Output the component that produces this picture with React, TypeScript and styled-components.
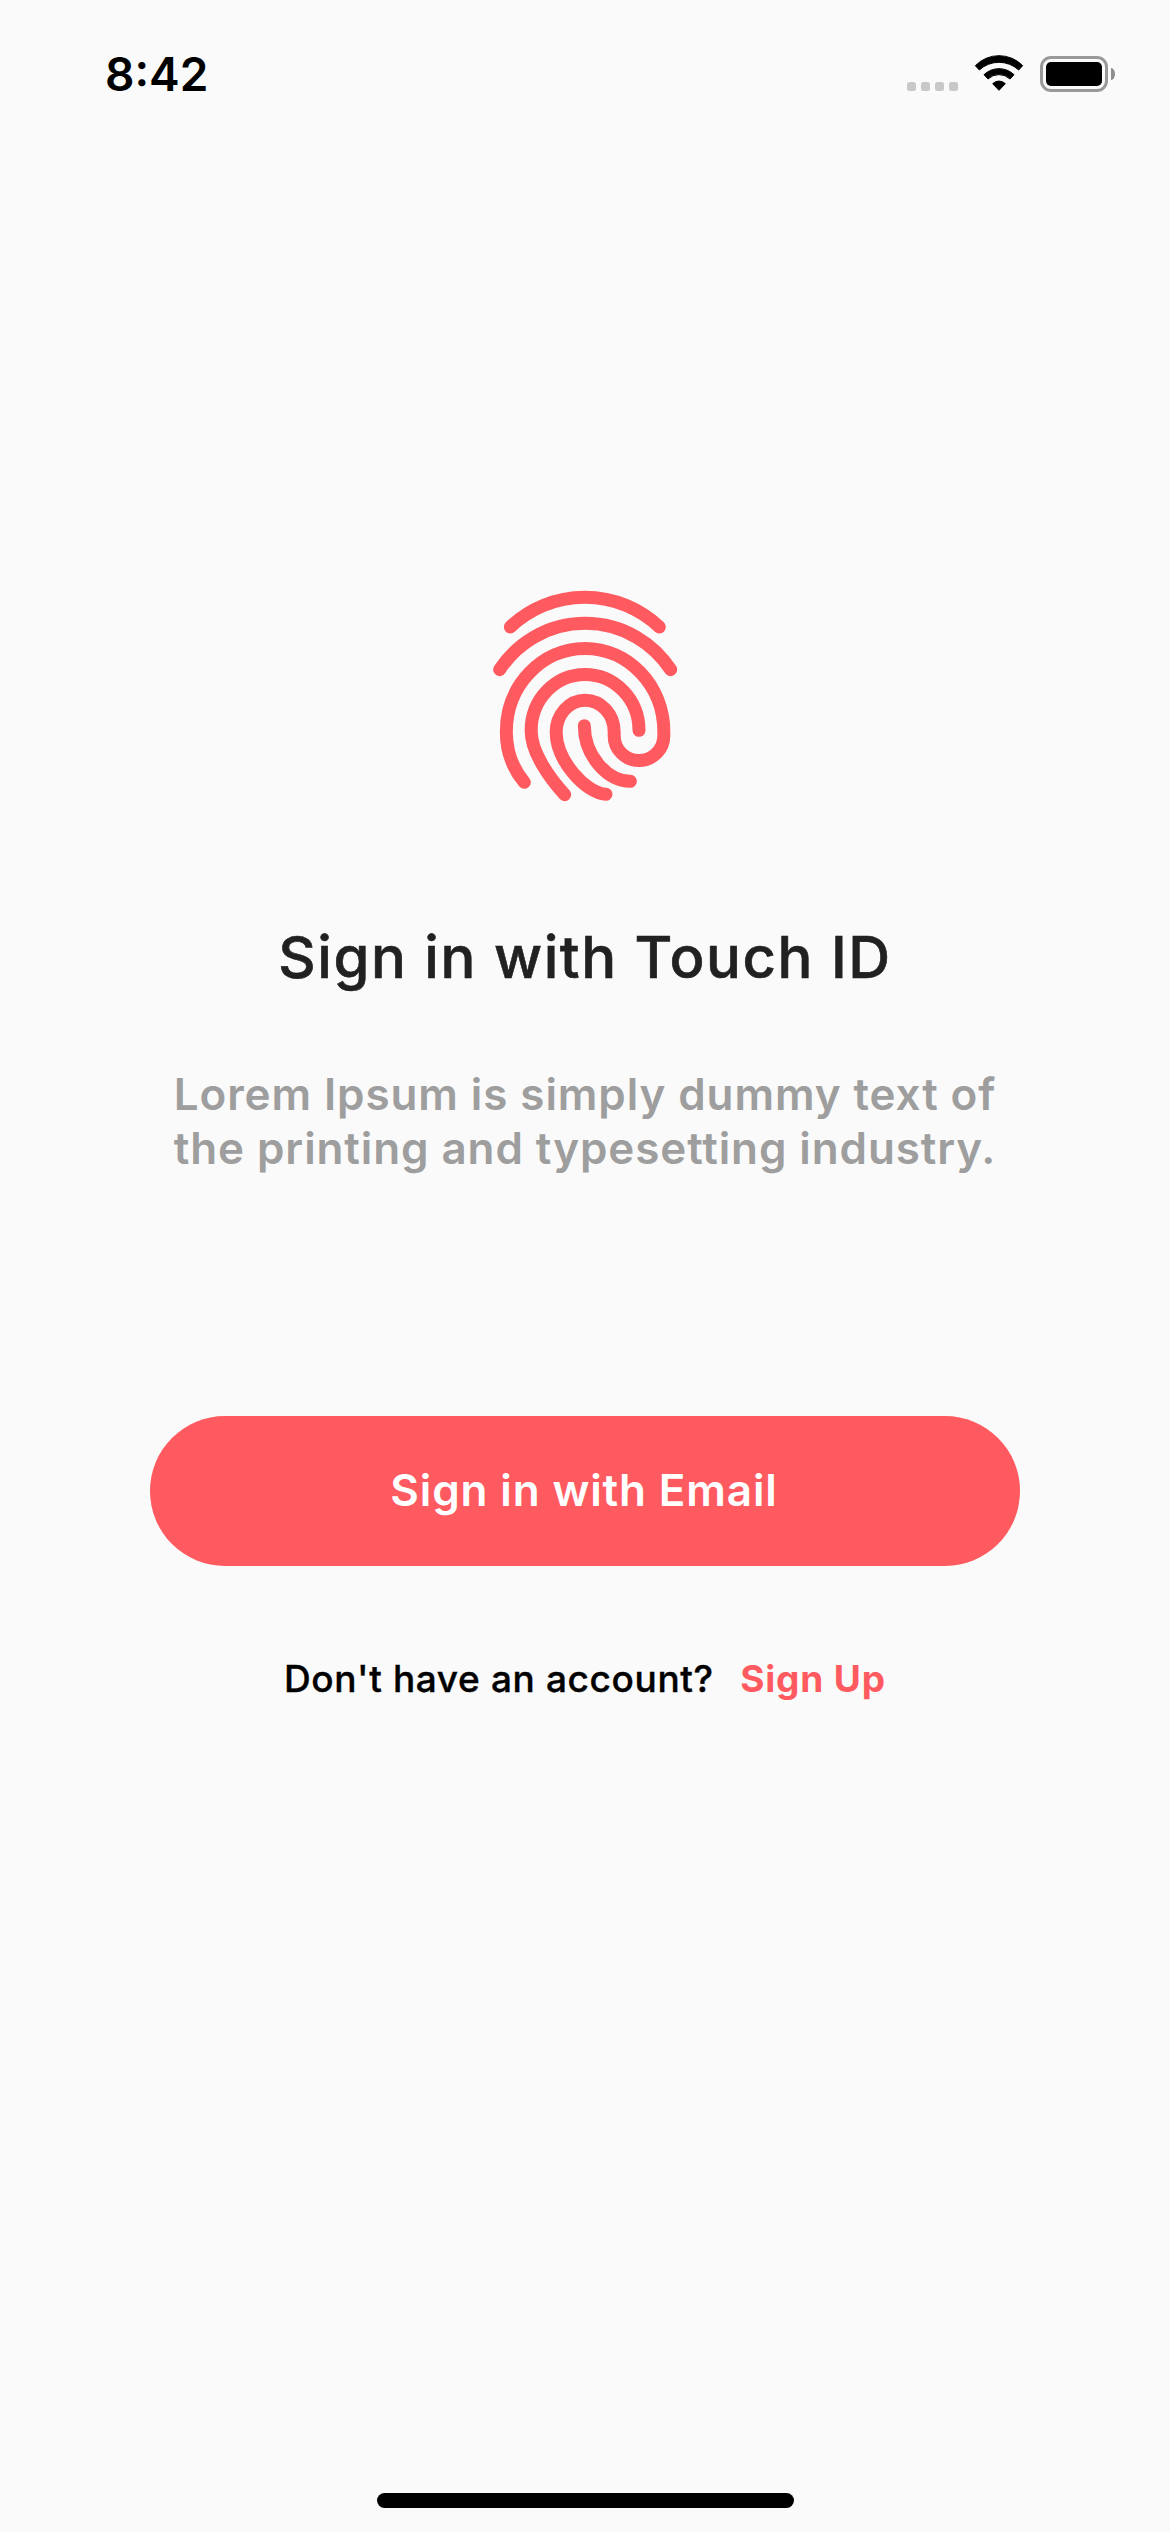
import React from "react";
import styled, { createGlobalStyle } from "styled-components";

const coral = "#ff5a60";

const GlobalStyle = createGlobalStyle`
  body {
    margin: 0;
    background: #fafafa;
    font-family: Inter, "Liberation Sans", sans-serif;
  }
`;

const Screen = styled.div`
  display: flex;
  flex-direction: column;
  align-items: center;
  box-sizing: border-box;
  width: 1170px;
  height: 2532px;
  padding-bottom: 24px;
  background: #fafafa;
  overflow: hidden;
`;

const StatusBar = styled.header`
  display: flex;
  justify-content: space-between;
  align-items: flex-start;
  box-sizing: border-box;
  width: 100%;
  height: 141px;
  padding: 46px 55px 0 105px;
`;

const Time = styled.time`
  font-size: 46px;
  font-weight: 600;
  line-height: 56px;
  color: #000;
`;

const StatusIcons = styled.div`
  display: flex;
  align-items: flex-end;
  height: 46px;
`;

const SignalDots = styled.div`
  display: flex;
  gap: 5px;
  margin: 0 16px 1px 0;
`;

const Dot = styled.span`
  width: 9px;
  height: 9px;
  border-radius: 2.5px;
  background: #c8c8c8;
`;

const WifiIcon = styled.svg`
  width: 50px;
  height: 38px;
  margin-right: 16px;
`;

const Battery = styled.div`
  display: flex;
  align-items: center;
  gap: 3px;
`;

const BatteryBody = styled.div`
  box-sizing: border-box;
  width: 68px;
  height: 36px;
  padding: 3px;
  border: 3px solid #999;
  border-radius: 11px;
`;

const BatteryLevel = styled.div`
  height: 100%;
  border-radius: 5px;
  background: #000;
`;

const BatteryCap = styled.span`
  width: 4px;
  height: 12px;
  border-radius: 0 4px 4px 0 / 0 6px 6px 0;
  background: #8e8e8e;
`;

const Content = styled.main`
  display: flex;
  flex: 1;
  flex-direction: column;
  align-items: center;
  padding-top: 429px;
`;

const Fingerprint = styled.svg`
  display: block;
  width: 230px;
  height: 250px;
`;

const Title = styled.h1`
  margin: 102px 0 0;
  font-size: 58px;
  font-weight: 500;
  line-height: 70px;
  letter-spacing: 1.55px;
  -webkit-text-stroke: 0.6px #212121;
  color: #212121;
`;

const Description = styled.p`
  width: 870px;
  margin: 75px 0 0;
  font-size: 44px;
  font-weight: 600;
  line-height: 54px;
  letter-spacing: 0.9px;
  text-align: center;
  color: #9e9e9e;
`;

const EmailButton = styled.button`
  width: 870px;
  height: 150px;
  margin-top: 241px;
  padding: 0 2px 2px 0;
  border: 0;
  border-radius: 75px;
  background: ${coral};
  font-family: inherit;
  font-size: 44px;
  font-weight: 600;
  line-height: 54px;
  letter-spacing: 0.86px;
  color: #fff;
`;

const SignUpRow = styled.div`
  display: flex;
  gap: 26.5px;
  margin-top: 90px;
  font-size: 37px;
  line-height: 45px;
`;

const Prompt = styled.span`
  font-weight: 500;
  letter-spacing: 0.63px;
  -webkit-text-stroke: 0.4px #000;
  color: #000;
`;

const SignUpLink = styled.a`
  font-weight: 700;
  letter-spacing: 0.85px;
  color: ${coral};
`;

const HomeIndicator = styled.div`
  width: 417px;
  height: 15px;
  border-radius: 8px;
  background: #000;
`;

export default function App() {
  return (
    <>
      <GlobalStyle />
      <Screen>
        <StatusBar>
          <Time>8:42</Time>
          <StatusIcons>
            <SignalDots>
              <Dot />
              <Dot />
              <Dot />
              <Dot />
            </SignalDots>
            <WifiIcon viewBox="252 42 150 114" stroke="#000" strokeWidth="3" strokeLinejoin="round">
              <path d="M256 77A99 99 0 0 1 398 77L386 90A87 87 0 0 0 268 90Z" />
              <path d="M282 104A65 65 0 0 1 372 104L360 117A48 48 0 0 0 294 117Z" />
              <path d="M308 131A27 27 0 0 1 346 131L327 151Z" />
            </WifiIcon>
            <Battery>
              <BatteryBody>
                <BatteryLevel />
              </BatteryBody>
              <BatteryCap />
            </Battery>
          </StatusIcons>
        </StatusBar>
        <Content>
          <Fingerprint
            viewBox="0 0 690 750"
            fill="none"
            stroke={coral}
            strokeWidth="39"
            strokeLinecap="round"
          >
            <path d="M121 171A325 325 0 0 1 568 171" />
            <path d="M89 299A306 306 0 0 1 602 299" />
            <path d="M163 637C128 595 109 545 109 485C109 347 215 235.500 345 235.500S581.500 347 581.500 485V497A74.500 74.500 0 0 1 432.500 497V485C432.500 433 393 390.500 345.500 390.500S258.500 433 258.500 487C258.500 570 345 668 408 673" />
            <path d="M507 481C507 388 434 313.500 345 313.500S183.500 388 183.500 482C183.500 545 235 620 284 674" />
            <path d="M343 467C343 555 410 633 481 634" />
          </Fingerprint>
          <Title>Sign in with Touch ID</Title>
          <Description>
            Lorem Ipsum is simply dummy text of
            <br />
            the printing and typesetting industry.
          </Description>
          <EmailButton type="button">Sign in with Email</EmailButton>
          <SignUpRow>
            <Prompt>Don't have an account?</Prompt>
            <SignUpLink>Sign Up</SignUpLink>
          </SignUpRow>
        </Content>
        <HomeIndicator />
      </Screen>
    </>
  );
}
